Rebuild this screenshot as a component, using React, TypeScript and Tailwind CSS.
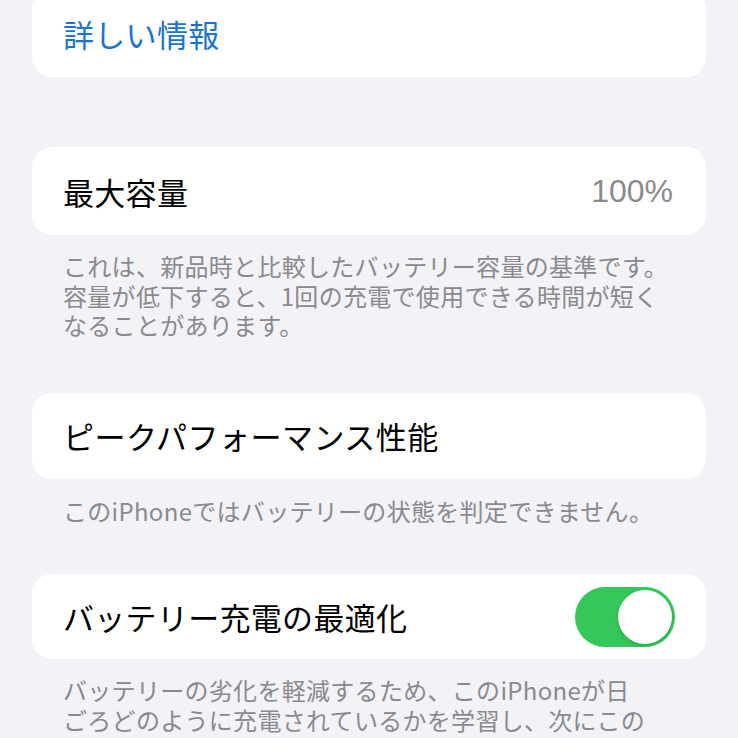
import React from "react";

const font = { fontFamily: '"Noto Sans CJK JP", "Noto Sans", sans-serif' };

function Footer({ lines, className = "" }: { lines: string[]; className?: string }) {
  return (
    <div className={`pl-[31px] text-[24px] leading-[29.5px] tracking-[0.3px] text-[#8a8a8e] ${className}`}>
      {lines.map((l, i) => (
        <div key={i} className="whitespace-nowrap">
          {l}
        </div>
      ))}
    </div>
  );
}

export default function App() {
  return (
    <div className="h-[738px] w-[738px] overflow-hidden bg-[#f2f2f7] px-[32px]" style={font}>
      <div className="-mt-[11px] flex h-[88px] items-center rounded-[20px] bg-white px-[31px]">
        <span className="text-[31px] leading-none tracking-[0.3px] text-[#1a73cc]">詳しい情報</span>
      </div>

      <div className="mt-[70px] flex h-[88px] items-center justify-between rounded-[20px] bg-white pl-[31px] pr-[33px]">
        <span className="text-[31px] leading-none tracking-[0.3px] text-black">最大容量</span>
        <span
          className="text-[32px] leading-none text-[#8a8a8e]"
          style={{ fontFamily: '"Liberation Sans", Arial, sans-serif' }}
        >
          100%
        </span>
      </div>
      <Footer
        className="pt-[16px]"
        lines={[
          "これは、新品時と比較したバッテリー容量の基準です。",
          "容量が低下すると、1回の充電で使用できる時間が短く",
          "なることがあります。",
        ]}
      />

      <div className="mt-[53px] flex h-[86px] items-center rounded-[20px] bg-white px-[31px]">
        <span className="text-[31px] leading-none tracking-[0.5px] text-black">ピークパフォーマンス性能</span>
      </div>
      <Footer className="pt-[17px]" lines={["このiPhoneではバッテリーの状態を判定できません。"]} />

      <div className="mt-[49px] flex h-[85px] items-center justify-between rounded-[20px] bg-white pl-[31px] pr-[31px]">
        <span className="text-[31px] leading-none tracking-[0.3px] text-black">バッテリー充電の最適化</span>
        <div className="flex h-[60px] w-[100px] items-center justify-end rounded-full bg-[#34c759] p-[3px]">
          <div className="h-[54px] w-[54px] rounded-full bg-white shadow-[0_2px_4px_rgba(0,0,0,0.15)]" />
        </div>
      </div>
      <Footer
        className="pt-[16px]"
        lines={[
          "バッテリーの劣化を軽減するため、このiPhoneが日",
          "ごろどのように充電されているかを学習し、次にこの",
        ]}
      />
    </div>
  );
}
